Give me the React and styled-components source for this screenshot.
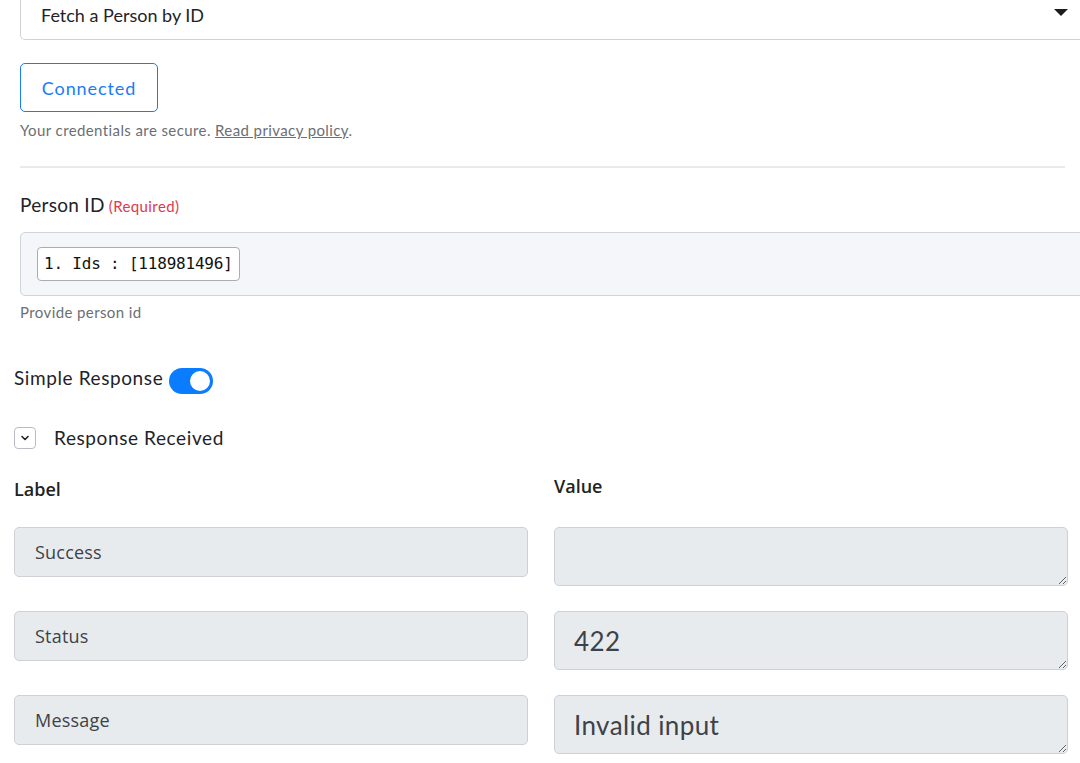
import React from "react";
import styled, { createGlobalStyle } from "styled-components";

const GlobalStyle = createGlobalStyle`
  html, body {
    margin: 0;
    padding: 0;
    background: #fff;
    overflow: hidden;
  }
  body {
    font-family: "Lato", "Noto Sans", sans-serif;
    color: #1f2328;
  }
`;

const Page = styled.div`
  width: 1080px;
  padding: 0 0 0 14px;
  margin-top: -9px;
  box-sizing: border-box;
`;

const SetupForm = styled.section`
  padding-left: 6px;
  width: 1120px;
  display: flex;
  flex-direction: column;
`;

const SelectBox = styled.div`
  height: 49px;
  border: 1px solid #cfd3d8;
  border-top: none;
  border-radius: 0 0 5px 5px;
  display: flex;
  align-items: center;
  padding: 0 20px;
  font-size: 18px;
  color: #1f2328;
  position: relative;
  box-sizing: border-box;
`;

const Caret = styled.span`
  position: absolute;
  left: 1033px;
  top: 18px;
  width: 0;
  height: 0;
  border-left: 7px solid transparent;
  border-right: 7px solid transparent;
  border-top: 7px solid #1c1c1c;
`;

const ConnectButton = styled.button`
  margin-top: 23px;
  width: 138px;
  height: 49px;
  border: 1px solid #1a7cf5;
  border-radius: 5px;
  background: #fff;
  color: #1a7cf5;
  font-family: "Lato", sans-serif;
  font-size: 18px;
  letter-spacing: 0.9px;
  padding: 0;
  cursor: pointer;
`;

const Hint = styled.p`
  margin: ${(p) => p.$top || 0}px 0 0;
  font-size: 15px;
  letter-spacing: 0.4px;
  color: #6b6f75;
  line-height: 18px;

  a {
    color: #6b6f75;
    text-decoration: underline;
  }
`;

const Divider = styled.hr`
  width: 1045px;
  margin: 27px 0 0;
  border: none;
  border-top: 2px solid #ece9ea;
`;

const FieldLabel = styled.label`
  margin-top: 25px;
  font-size: 19px;
  letter-spacing: 0.3px;
  color: #1f2328;
  display: flex;
  align-items: baseline;
  gap: 4px;
`;

const Required = styled.span`
  font-size: 15px;
  letter-spacing: 0.4px;
  color: #e0384e;
`;

const TokenInput = styled.div`
  margin-top: 16px;
  height: 64px;
  background: #f4f6f9;
  border: 1px solid #cfd4da;
  border-radius: 5px;
  display: flex;
  align-items: center;
  padding: 0 16px;
  box-sizing: border-box;
`;

const Token = styled.span`
  font-family: "DejaVu Sans Mono", "Liberation Mono", monospace;
  font-size: 16px;
  letter-spacing: -0.2px;
  color: #111;
  background: #fff;
  border: 1px solid #a9adb3;
  border-radius: 4px;
  padding: 6px 6px;
  line-height: 20px;
`;

const ToggleRow = styled.div`
  margin-top: 39px;
  display: flex;
  align-items: center;
  gap: 6px;
  font-size: 19px;
  letter-spacing: 0.6px;
`;

const Switch = styled.span`
  width: 44px;
  height: 26px;
  border-radius: 13px;
  background: #0a7cff;
  position: relative;
  margin-top: 8px;
  display: inline-block;

  &::after {
    content: "";
    position: absolute;
    right: 3px;
    top: 3px;
    width: 20px;
    height: 20px;
    border-radius: 50%;
    background: #fff;
  }
`;

const Collapse = styled.div`
  margin-top: 32px;
  display: flex;
  align-items: center;
  gap: 18px;
  font-size: 19px;
  letter-spacing: 0.6px;
`;

const ChevronBox = styled.span`
  width: 20px;
  height: 20px;
  border: 1px solid #b9bdc3;
  border-radius: 4px;
  display: flex;
  align-items: center;
  justify-content: center;
  color: #222;
`;

const ResultGrid = styled.div`
  margin-top: 25px;
  width: 1054px;
  display: grid;
  grid-template-columns: 514px 514px;
  column-gap: 26px;
  row-gap: 25px;
  align-items: start;
`;

const ColumnHead = styled.div`
  font-family: "Open Sans", sans-serif;
  font-weight: 600;
  font-size: 18px;
  color: #222;
  margin-top: ${(p) => p.$top || 0}px;
  margin-bottom: 1px;
`;

const KeyBox = styled.div`
  height: 50px;
  background: #e8ebee;
  border: 1px solid #cdd1d6;
  border-radius: 5px;
  display: flex;
  align-items: center;
  padding: 0 20px;
  box-sizing: border-box;
  font-family: "Open Sans", sans-serif;
  font-size: 18px;
  letter-spacing: 0.2px;
  color: #3d4248;
`;

const ValueArea = styled.textarea`
  height: 59px;
  width: 100%;
  margin: 0;
  display: block;
  background: #e8ebee;
  border: 1px solid #cdd1d6;
  border-radius: 5px;
  box-sizing: border-box;
  padding: 14px 19px 0;
  font-family: "Lato", sans-serif;
  font-size: 26px;
  letter-spacing: 0.4px;
  line-height: 30px;
  color: #3d4248;
  resize: vertical;
  overflow: hidden;
  outline: none;
`;

const rows = [
  { key: "Success", value: "" },
  { key: "Status", value: "422" },
  { key: "Message", value: "Invalid input" },
];

export default function App() {
  return (
    <Page>
      <GlobalStyle />
      <SetupForm>
        <SelectBox>
          Fetch a Person by ID
          <Caret />
        </SelectBox>
        <div>
          <ConnectButton>Connected</ConnectButton>
        </div>
        <Hint $top={9}>
          Your credentials are secure. <a href="#">Read privacy policy</a>.
        </Hint>
        <Divider />
        <FieldLabel>
          Person ID <Required>(Required)</Required>
        </FieldLabel>
        <TokenInput>
          <Token>1. Ids : [118981496]</Token>
        </TokenInput>
        <Hint $top={7}>Provide person id</Hint>
      </SetupForm>

      <ToggleRow>
        Simple Response
        <Switch />
      </ToggleRow>

      <Collapse>
        <ChevronBox>
          <svg width="12" height="12" viewBox="0 0 24 24" fill="none" stroke="currentColor" strokeWidth="3.2" strokeLinecap="round" strokeLinejoin="round">
            <polyline points="6 9 12 15 18 9" />
          </svg>
        </ChevronBox>
        Response Received
      </Collapse>

      <ResultGrid>
        <ColumnHead $top={3}>Label</ColumnHead>
        <ColumnHead>Value</ColumnHead>
        {rows.map((r) => (
          <React.Fragment key={r.key}>
            <KeyBox>{r.key}</KeyBox>
            <ValueArea readOnly value={r.value} />
          </React.Fragment>
        ))}
      </ResultGrid>
    </Page>
  );
}
